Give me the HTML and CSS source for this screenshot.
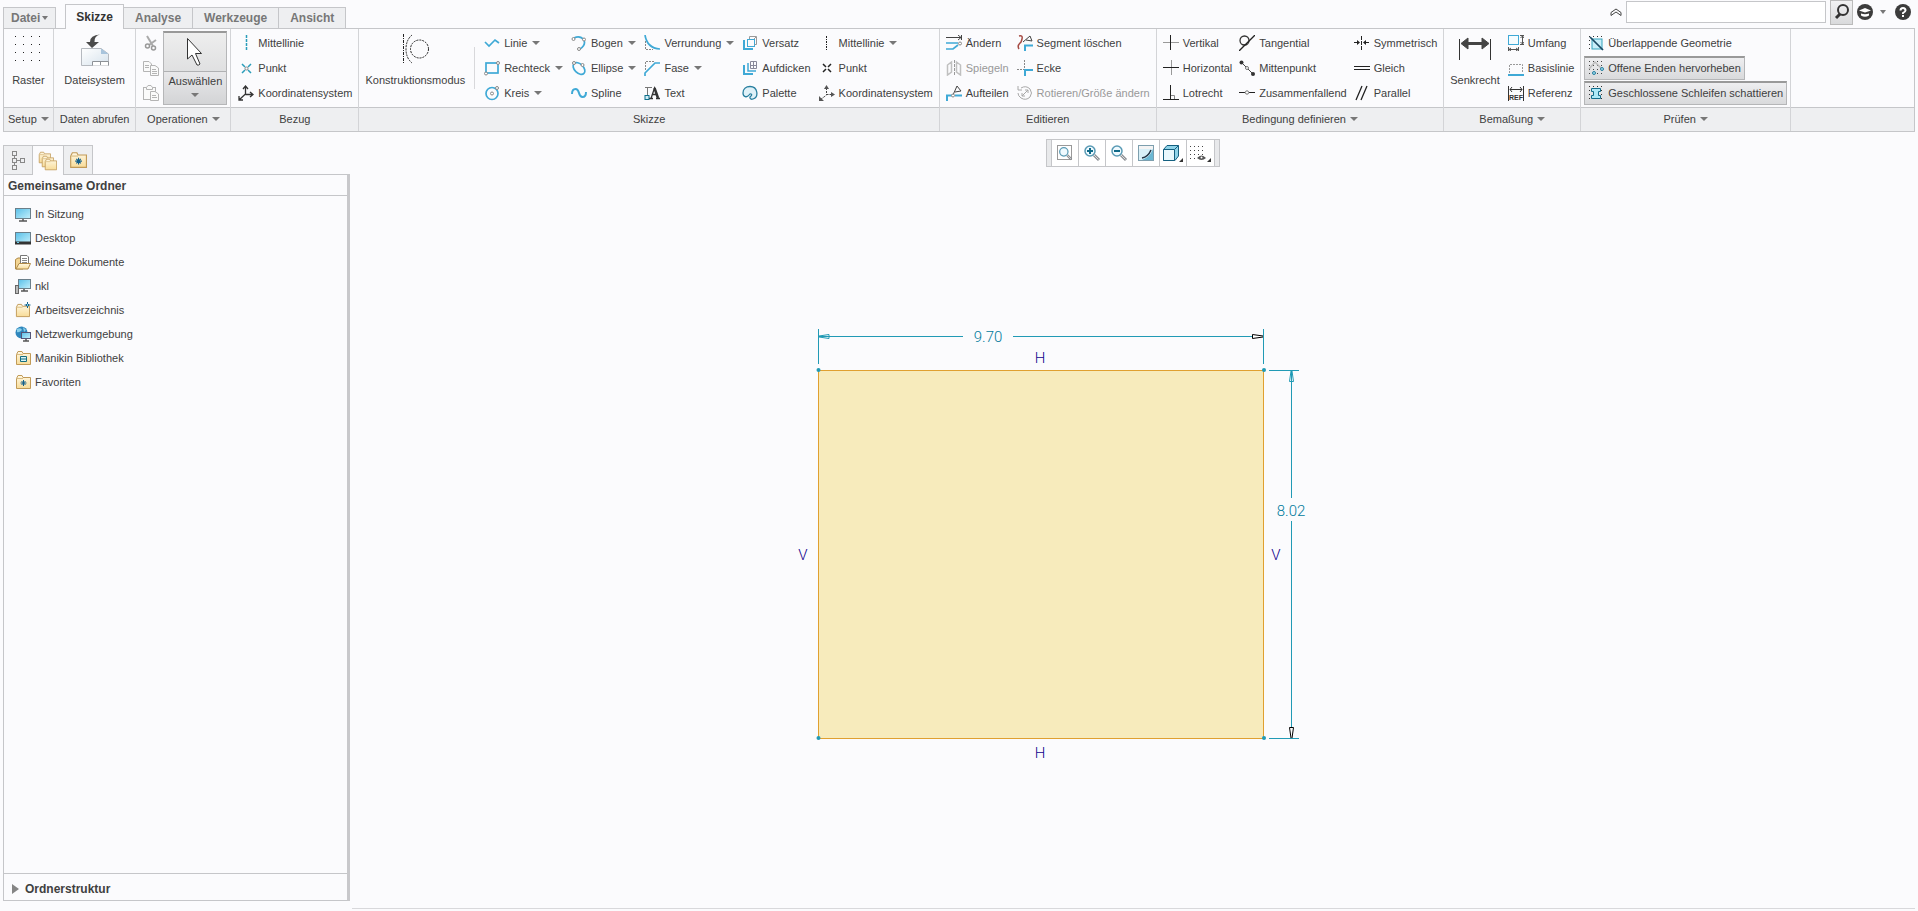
FILE: index.html
```html
<!DOCTYPE html>
<html lang="de">
<head>
<meta charset="utf-8">
<title>Skizze</title>
<link rel="stylesheet" href="styles.css">
</head>
<body>
<svg class="defs" aria-hidden="true">
  <defs>
    <linearGradient id="g-screen" x1="0" y1="0" x2="1" y2="1"><stop offset="0" stop-color="#58bfe8"/><stop offset="1" stop-color="#c4f0fc"/></linearGradient>
    <linearGradient id="g-folder" x1="0" y1="0" x2="0" y2="1"><stop offset="0" stop-color="#fff8e4"/><stop offset="1" stop-color="#f8dc98"/></linearGradient>
    <linearGradient id="g-page" x1="0" y1="0" x2="1" y2="1"><stop offset="0" stop-color="#fff"/><stop offset="1" stop-color="#d6e2ec"/></linearGradient>
    <symbol id="folder" viewBox="0 0 16 16"><path d="M1.500 4.500V14.500H15.500V3.500H8L7 1.500H3L1.500 4.500" fill="url(#g-folder)" stroke="#c19a57"/><path d="M2 4.500H8" stroke="#d9bd84"/></symbol>
    <symbol id="star" viewBox="0 0 16 16"><path d="M8.500 6V12M5.500 9H11.500M6.500 7L10.500 11M10.500 7L6.500 11" stroke="#14608a" fill="none"/></symbol>
    <symbol id="lens" viewBox="0 0 18 18"><path d="M11 11L16 16" stroke="#8b8f94" stroke-width="3"/><path d="M11 11L15.500 15.500" stroke="#ddd"/><circle cx="7" cy="7" r="5" fill="#effaff" stroke="#5a9bb5" stroke-width="1.500"/></symbol>
  </defs>
</svg>

<header class="topbar">
  <nav class="tabs">
    <button class="tab file">Datei<i class="arrow"></i></button>
    <button class="tab active">Skizze</button>
    <button class="tab">Analyse</button>
    <button class="tab">Werkzeuge</button>
    <button class="tab">Ansicht</button>
  </nav>
  <div class="search">
    <button class="plain" aria-label="Menüband minimieren"><svg width="12" height="8"><path d="M1 4.500L6 1L11 4.500M1 7.500L6 4L11 7.500M1 4.500V7.500M11 4.500V7.500" stroke="#444" fill="none"/></svg></button>
    <input type="text" class="search-box" aria-label="Suchen">
    <button class="search-btn" aria-label="Suche starten"><svg width="16" height="18"><circle cx="9" cy="7" r="5" fill="none" stroke="#333" stroke-width="2"/><path d="M6 11L2 15" stroke="#333" stroke-width="3"/></svg></button>
    <button class="plain learn" aria-label="Lernen"><svg width="16" height="16"><circle cx="8" cy="8" r="8" fill="#3c3c3c"/><path d="M2 6.500L8 4L14 6.500L8 8.500Z" fill="#fff"/><path d="M4 9.500Q8 11 12 9.500V11.500Q8 14 4 11.500Z" fill="#fff"/></svg><i class="arrow"></i></button>
    <button class="plain" aria-label="Hilfe"><svg width="16" height="16"><circle cx="8" cy="8" r="8" fill="#3c3c3c"/><path d="M5.500 6.500Q5.500 4 8 4T10.500 6.500Q10.500 7.500 8 9V10" fill="none" stroke="#fff" stroke-width="2"/><rect x="7" y="11" width="2" height="2" fill="#fff"/></svg></button>
  </div>
</header>

<section class="ribbon">
  <div class="group setup">
    <div class="body">
      <button class="big"><svg width="28" height="28"><path d="M1 2.500H28M1 10.500H28M1 18.500H28M1 26.500H28" stroke="#222" stroke-dasharray="1 7"/></svg><span>Raster</span></button>
    </div>
    <button class="label">Setup<i class="arrow"></i></button>
  </div>
  <div class="group data">
    <div class="body">
      <button class="big"><svg width="28" height="32"><path d="M.500 14.500H20L27.500 20V31.500H.500Z" fill="url(#g-page)" stroke="#b5b9bf"/><path d="M20 14.500V20H27.500Z" fill="#a8c4dc"/><path d="M11.500 31.500V27.500H27.500V31.500M19.500 27.500V31" fill="#fff" stroke="#8d9196"/><path d="M19 .500Q13 2 13.500 8H18L11 14L5 8H9Q9 1 19 .500Z" fill="#4b4b4b"/></svg><span>Dateisystem</span></button>
    </div>
    <div class="label">Daten abrufen</div>
  </div>
  <div class="group">
    <div class="body ops">
      <div class="col">
        <button class="item" aria-label="Ausschneiden"><svg width="16" height="16"><path d="M4 1L10 11M13 5L6 10" stroke="#aaa" stroke-width="2"/><circle cx="4.500" cy="11" r="2" fill="none" stroke="#999" stroke-width="1.500"/><circle cx="10.500" cy="13" r="2" fill="none" stroke="#999" stroke-width="1.500"/></svg></button>
        <button class="item" aria-label="Kopieren"><svg width="16" height="16"><g fill="#fafafa" stroke="#b4b4b4"><path d="M.500 1.500H6L8.500 4V11.500H.500Z"/><path d="M7.500 5.500H12L15.500 8V15.500H7.500Z"/><path d="M2 5.500H6M2 7.500H6M9 9.500H13M9 11.500H14M9 13.500H14"/></g></svg></button>
        <button class="item" aria-label="Einfügen"><svg width="16" height="16"><g fill="#fafafa" stroke="#b4b4b4"><rect x=".500" y="2.500" width="12" height="12"/><path d="M3.500 2.500L5 .500H8L9.500 2.500V4.500H3.500Z"/><path d="M7.500 6.500H12L15.500 9V15.500H7.500Z"/><path d="M9 10.500H13M9 12.500H14"/></g></svg></button>
      </div>
      <button class="select-btn"><span class="top"><svg width="18" height="30"><path d="M1.500 1.500V22L6 18L11 28Q13 28.500 14 27L9.500 16.500H15.500Z" fill="#fff" stroke="#333"/></svg></span><span class="bottom">Auswählen<i class="arrow"></i></span></button>
    </div>
    <button class="label">Operationen<i class="arrow"></i></button>
  </div>
  <div class="group">
    <div class="body reference">
      <div class="col">
        <button class="item"><svg width="16" height="16"><path d="M8.500 0V16" stroke="#2a9dba" stroke-width="1.500" stroke-dasharray="3 1"/></svg>Mittellinie</button>
        <button class="item"><svg width="16" height="16"><path d="M4 4L7 7M13 4L10 7M4 13L7 10M13 13L10 10" stroke="#2a9dba" stroke-width="1.500"/><circle cx="8.500" cy="8.500" r="1.500" fill="none" stroke="#888"/></svg>Punkt</button>
        <button class="item"><svg width="16" height="16"><path d="M7.500 1V9L1 15M7.500 9.500H15M5 4L7.500 1L10 4M12 7L15 9.500L12 12M1 11V15H5" stroke="#333" fill="none" stroke-width="1.300"/></svg>Koordinatensystem</button>
      </div>
    </div>
    <div class="label">Bezug</div>
  </div>
  <div class="group">
    <div class="body">
      <button class="big"><svg width="28" height="30"><g fill="none" stroke="#222" stroke-dasharray="2 1"><path d="M2.500 0V30" stroke-dasharray="3 1 1 1"/><path d="M11 1Q5 6 5 15T11 29"/><circle cx="18.500" cy="15" r="9"/></g></svg><span>Konstruktionsmodus</span></button>
      <div class="sep"></div>
      <div class="col">
        <button class="item"><svg width="16" height="16"><path d="M1 7L5 11L11 5L15 8" fill="none" stroke="#3fa9d6" stroke-width="1.700"/></svg>Linie<i class="arrow"></i></button>
        <button class="item"><svg width="16" height="16"><rect x="2" y="3" width="12" height="10" fill="none" stroke="#3fa9d6" stroke-width="1.700"/><g fill="#fff" stroke="#888"><circle cx="2" cy="13.500" r="1.500"/><circle cx="14" cy="3" r="1.500"/></g></svg>Rechteck<i class="arrow"></i></button>
        <button class="item"><svg width="16" height="16"><circle cx="8" cy="8.500" r="6" fill="none" stroke="#3fa9d6" stroke-width="1.700"/><g fill="#fff" stroke="#888"><circle cx="8" cy="8.500" r="1.500"/><circle cx="13" cy="3" r="1.500"/></g></svg>Kreis<i class="arrow"></i></button>
      </div>
      <div class="col">
        <button class="item"><svg width="16" height="16"><path d="M3 3Q9 0 13 5Q15 10 9 14" fill="none" stroke="#3fa9d6" stroke-width="1.700"/><g fill="#fff" stroke="#888"><circle cx="2.500" cy="4" r="1.500"/><circle cx="13" cy="4.500" r="1.500"/><circle cx="8" cy="14" r="1.500"/></g></svg>Bogen<i class="arrow"></i></button>
        <button class="item"><svg width="16" height="16"><ellipse cx="8" cy="8.500" rx="7" ry="4.500" transform="rotate(45 8 8.500)" fill="none" stroke="#3fa9d6" stroke-width="1.700"/><g fill="#fff" stroke="#888"><circle cx="3" cy="3" r="1.500"/><circle cx="11.500" cy="5" r="1.500"/></g></svg>Ellipse<i class="arrow"></i></button>
        <button class="item"><svg width="16" height="16"><path d="M1 9Q1 4 4.500 4Q7 4 8 8T11.500 12Q15 12 15 7" fill="none" stroke="#3fa9d6" stroke-width="2"/></svg>Spline</button>
      </div>
      <div class="col">
        <button class="item"><svg width="16" height="16"><path d="M1.500 6V14.500H9" fill="none" stroke="#888" stroke-dasharray="2 1"/><path d="M1 0Q3 13 16 14" fill="none" stroke="#3fa9d6" stroke-width="1.700"/></svg>Verrundung<i class="arrow"></i></button>
        <button class="item"><svg width="16" height="16"><path d="M1.500 10V1.500H11" fill="none" stroke="#888" stroke-dasharray="2 1"/><path d="M1 16V13L11 3H16" fill="none" stroke="#3fa9d6" stroke-width="1.700"/></svg>Fase<i class="arrow"></i></button>
        <button class="item"><svg width="16" height="16"><path d="M1 2.500H8M3.500 2V10" stroke="#777"/><path d="M5 13.500H9M12 13.500H16M7 13.500L10.500 3L14 13.500M8.500 9.500H12.500" fill="none" stroke="#333" stroke-width="1.300"/><path d="M10.500 3L14 13" stroke="#333" stroke-width="2.500"/><rect x="1" y="10.500" width="4" height="4" fill="#cfeef7" stroke="#0d6f8c"/></svg>Text</button>
      </div>
      <div class="col">
        <button class="item"><svg width="16" height="16"><path d="M2 5V14H11" fill="none" stroke="#3fa9d6" stroke-width="2"/><rect x="5.500" y="4.500" width="7" height="7" fill="none" stroke="#3fa9d6"/><path d="M7.500 4V1.500H14.500V9.500H12.500M12 4L14 2" fill="none" stroke="#999"/></svg>Versatz</button>
        <button class="item"><svg width="16" height="16"><path d="M2 5V14H11" fill="none" stroke="#3fa9d6" stroke-width="2"/><path d="M6 3V11H14" fill="none" stroke="#3fa9d6" stroke-width="1.500"/><path d="M8.500 1.500H14.500V8.500H8.500ZM11.500 1V9M8 5.500H15" fill="none" stroke="#889"/></svg>Aufdicken</button>
        <button class="item"><svg width="16" height="16"><path d="M8 1.500C16 1.500 17 12 11 14C8 15 7 12 9 11C11 9 8 8 7 10C5 13 1 12 1 8C1 4 4 1.500 8 1.500Z" fill="#dff1f8" stroke="#287f9f" stroke-width="1.300"/></svg>Palette</button>
      </div>
      <div class="col">
        <button class="item"><svg width="16" height="16"><path d="M7.500 1V16" stroke="#222" stroke-dasharray="2 1 1 1"/></svg>Mittellinie<i class="arrow"></i></button>
        <button class="item"><svg width="16" height="16"><path d="M4 4L7 7M12 4L9 7M4 12L7 9M12 12L9 9" stroke="#222" stroke-width="1.500"/></svg>Punkt</button>
        <button class="item"><svg width="16" height="16"><path d="M7.500 3V10L1 15M7.500 9.500H13" stroke="#444" fill="none" stroke-dasharray="2 1"/><path d="M5 4L7.500 0L10 4ZM12 7L16 9.500L12 12ZM0 11V16H5Z" fill="#555"/></svg>Koordinatensystem</button>
      </div>
    </div>
    <div class="label">Skizze</div>
  </div>
  <div class="group">
    <div class="body">
      <div class="col">
        <button class="item"><svg width="16" height="16"><path d="M0 2.500H15M15.500 0V5M12 0L15 2.500L12 5" stroke="#444" fill="none"/><path d="M0 8H12M0 14H7L12 10" stroke="#3fa9d6" fill="none" stroke-width="1.700"/><circle cx="14" cy="8.500" r="1.500" fill="#fff" stroke="#888"/></svg>Ändern</button>
        <button class="item" disabled><svg width="16" height="16"><path d="M1.500 5L5.500 2V12L1.500 15ZM10.500 2L14.500 5V15L10.500 12Z" fill="none" stroke="#c0c0c0" stroke-width="1.500"/><path d="M8.500 0V16" stroke="#999" stroke-dasharray="3 1"/></svg>Spiegeln</button>
        <button class="item"><svg width="16" height="16"><path d="M1 16V10.500H6M9 10.500H16" fill="none" stroke="#3fa9d6" stroke-width="2"/><path d="M7 10L11 1L15 6L9 7" fill="none" stroke="#444"/><circle cx="7" cy="10.500" r="1.500" fill="#fff" stroke="#888"/></svg>Aufteilen</button>
      </div>
      <div class="col">
        <button class="item"><svg width="16" height="16"><path d="M2 1Q6 0 5 4T3 8Q0 11 2 14" fill="none" stroke="#a64b44" stroke-width="1.500"/><path d="M6 7L13 1L15 6L9 5" fill="none" stroke="#444"/><path d="M8 16V10.500H16" fill="none" stroke="#3fa9d6" stroke-width="2"/></svg>Segment löschen</button>
        <button class="item"><svg width="16" height="16"><path d="M7.500 0V9M0 9.500H7" stroke="#888" stroke-dasharray="2 1"/><path d="M8 16V10H16" fill="none" stroke="#3fa9d6" stroke-width="2"/></svg>Ecke</button>
        <button class="item" disabled><svg width="16" height="16"><path d="M4 3Q9 0 13 4Q16 8 13 12Q9 16 4 13Q1 11 1 8M1 1V5H5M5 11L11 5M8 5H11V8M5 8V11H8" fill="none" stroke="#a8a8a8"/></svg>Rotieren/Größe ändern</button>
      </div>
    </div>
    <div class="label">Editieren</div>
  </div>
  <div class="group">
    <div class="body conditions">
      <div class="col">
        <button class="item"><svg width="16" height="16"><path d="M0 7.500H16" stroke="#999"/><path d="M7.500 0V15" stroke="#222"/></svg>Vertikal</button>
        <button class="item"><svg width="16" height="16"><path d="M8.500 0V15" stroke="#999"/><path d="M0 7.500H16" stroke="#222"/></svg>Horizontal</button>
        <button class="item"><svg width="16" height="16"><path d="M7.500 0V14M0 14.500H16" stroke="#222"/><path d="M8 10.500H11.500V14" fill="none" stroke="#888"/></svg>Lotrecht</button>
      </div>
      <div class="col">
        <button class="item"><svg width="16" height="16"><circle cx="5.500" cy="5.500" r="4.500" fill="none" stroke="#333" stroke-width="1.300"/><path d="M0 16L16 0" stroke="#222" stroke-width="1.300"/></svg>Tangential</button>
        <button class="item"><svg width="16" height="16"><path d="M2 2L14 14" stroke="#444"/><circle cx="2.500" cy="2.500" r="2" fill="#333"/><circle cx="14" cy="14" r="2" fill="#333"/><circle cx="8" cy="8" r="1.500" fill="#fff" stroke="#777"/></svg>Mittenpunkt</button>
        <button class="item"><svg width="16" height="16"><path d="M0 7.500H6M10 7.500H16" stroke="#222"/><circle cx="8" cy="7.500" r="1.700" fill="#fff" stroke="#777"/></svg>Zusammenfallend</button>
      </div>
      <div class="col">
        <button class="item"><svg width="16" height="16"><path d="M7.500 1V15" stroke="#222" stroke-dasharray="4 1"/><path d="M0 7.500H4M11 7.500H15" stroke="#222"/><path d="M3 5L6 7.500L3 10ZM12 5L9 7.500L12 10Z" fill="#222"/></svg>Symmetrisch</button>
        <button class="item"><svg width="16" height="16"><path d="M0 6.500H16M0 9.500H16" stroke="#222"/></svg>Gleich</button>
        <button class="item"><svg width="16" height="16"><path d="M2 15L8 1M7 15L13 1" stroke="#222" stroke-width="1.300"/></svg>Parallel</button>
      </div>
    </div>
    <button class="label">Bedingung definieren<i class="arrow"></i></button>
  </div>
  <div class="group">
    <div class="body">
      <button class="big"><svg width="32" height="26"><path d="M.500 5V26M31.500 5V26" stroke="#333"/><path d="M2 9.500L9 4V8.500H23V4L30 9.500L23 15V10.500H9V15Z" fill="#444" stroke="#444"/></svg><span>Senkrecht</span></button>
      <div class="col">
        <button class="item"><svg width="16" height="16"><rect x=".500" y=".500" width="10" height="9" fill="#f4fcff" stroke="#3fa9d6"/><path d="M14.500 1V9M12 .500H16M12 9.500H16M12.500 3L14.500 1L16 3M12.500 7L14.500 9L16 7M.500 12V16M10.500 12V16M1 14.500H10M3 13L1 14.500L3 16M8 13L10 14.500L8 16" fill="none" stroke="#555"/></svg>Umfang</button>
        <button class="item"><svg width="16" height="16"><path d="M1.500 13V4.500H14.500V13" fill="none" stroke="#999" stroke-dasharray="2 1"/><path d="M0 15H16" stroke="#3fa9d6" stroke-width="2"/></svg>Basislinie</button>
        <button class="item"><svg width="16" height="16"><path d="M.500 1V16M15.500 1V16M2 4.500H14M4 2L2 4.500L4 7M12 2L14 4.500L12 7" fill="none" stroke="#333"/><text x="8" y="15" class="ref-text">REF</text></svg>Referenz</button>
      </div>
    </div>
    <button class="label">Bemaßung<i class="arrow"></i></button>
  </div>
  <div class="group">
    <div class="body checks">
      <div class="col">
        <button class="item"><svg width="16" height="16"><path d="M1 1.500H16M1 5.500H16M1 9.500H16M1 13.500H16" stroke="#333" stroke-dasharray="1 3"/><rect x="4" y="4" width="10" height="10" fill="#c9effa" stroke="#35a3bd"/><path d="M2 2L15 15" stroke="#1c4963" stroke-width="1.700"/></svg>Überlappende Geometrie</button>
        <button class="item pressed"><svg width="16" height="16"><path d="M1 1.500H16M1 5.500H16M1 9.500H16M1 13.500H16" stroke="#444" stroke-dasharray="1 3"/><path d="M1 9L7 2L13 8" fill="none" stroke="#bbb" stroke-width="1.500"/><circle cx="6" cy="13" r="1.500" fill="#9edcf0" stroke="#287f9f"/><circle cx="14" cy="9" r="1.500" fill="#9edcf0" stroke="#287f9f"/></svg>Offene Enden hervorheben</button>
        <button class="item pressed"><svg width="16" height="16"><path d="M1 1.500H16M1 5.500H16M1 9.500H16M1 13.500H16" stroke="#333" stroke-dasharray="1 3"/><path d="M3.500 3.500H12.500V6.500H10.500V10.500H12.500V13.500H3.500V10.500H5.500V6.500H3.500Z" fill="#aee9f8" stroke="#146e8c"/></svg>Geschlossene Schleifen schattieren</button>
      </div>
    </div>
    <button class="label">Prüfen<i class="arrow"></i></button>
  </div>
  <div class="group rest"><div class="body"></div><div class="label"></div></div>
</section>

<main class="work">
  <aside class="side">
    <nav class="side-tabs">
      <button class="side-tab" aria-label="Modellbaum"><svg width="16" height="20"><g fill="none" stroke="#888"><rect x="2.500" y="1.500" width="4" height="4"/><rect x="2.500" y="8.500" width="4" height="4"/><rect x="10.500" y="8.500" width="4" height="4"/><rect x="2.500" y="15.500" width="4" height="4"/><path d="M4.500 6V8M4.500 13V15M7 10.500H10"/></g></svg></button>
      <button class="side-tab active" aria-label="Ordnerbrowser"><svg width="20" height="20"><use href="#folder" width="13" height="13"/><use href="#folder" x="3" y="4" width="13" height="13"/><use href="#folder" x="6" y="7" width="13" height="13"/></svg></button>
      <button class="side-tab" aria-label="Favoriten"><svg width="18" height="18"><use href="#folder" width="18" height="18"/><use href="#star" width="18" height="18"/></svg></button>
    </nav>
    <div class="panel">
      <h2 class="panel-title">Gemeinsame Ordner</h2>
      <ul class="folders">
        <li><a href="#"><svg width="16" height="16"><rect x=".500" y="2.500" width="15" height="10" fill="url(#g-screen)" stroke="#6b7f8a"/><path d="M8 13V15M4 15H12" stroke="#555" stroke-width="1.500"/></svg>In Sitzung</a></li>
        <li><a href="#"><svg width="16" height="16"><rect x=".500" y="2.500" width="15" height="11" fill="url(#g-screen)" stroke="#6b7f8a"/><path d="M0 13H16" stroke="#333" stroke-width="3"/><path d="M2 12.500H4" stroke="#6fd0ea"/></svg>Desktop</a></li>
        <li><a href="#"><svg width="16" height="16"><path d="M.500 15V5.500L3 4H8V15Z" fill="#f3d594" stroke="#b08a48"/><path d="M5.500 12V1.500H12L13.500 3V12Z" fill="#fff" stroke="#777"/><path d="M7 4.500H12M7 6.500H12M7 8.500H12" stroke="#888"/><path d="M1 15L4 9.500H15.500L13 15Z" fill="url(#g-folder)" stroke="#b08a48"/></svg>Meine Dokumente</a></li>
        <li><a href="#"><svg width="16" height="16"><rect x="3.500" y="1.500" width="12" height="9" fill="url(#g-screen)" stroke="#6b7f8a"/><path d="M9 11V13M6 13H13" stroke="#555" stroke-width="1.500"/><rect x=".500" y="7.500" width="3" height="8" fill="#bbb" stroke="#666"/></svg>nkl</a></li>
        <li><a href="#"><svg width="16" height="16"><use href="#folder" y="1" width="15" height="15"/><path d="M12.500 0V6M9.500 3H15.500" stroke="#14608a"/><path d="M12.500 1.500L14 3L12.500 4.500L11 3Z" fill="#7ed0e8" stroke="#14608a"/></svg>Arbeitsverzeichnis</a></li>
        <li><a href="#"><svg width="16" height="16"><circle cx="6.500" cy="6.500" r="6" fill="#2f86bd"/><path d="M2 3Q6 1 7 4Q4 7 2 6M8 1L11 4L9 6" fill="#8ad0ea"/><rect x="6.500" y="6.500" width="9" height="6" fill="url(#g-screen)" stroke="#557"/><path d="M11 13V15M8 15H14" stroke="#555" stroke-width="1.500"/></svg>Netzwerkumgebung</a></li>
        <li><a href="#"><svg width="16" height="16"><use href="#folder" width="16" height="16"/><path d="M5.500 6.500H11.500V11.500H5.500ZM5 9H12" fill="#d9f3f6" stroke="#146e80"/></svg>Manikin Bibliothek</a></li>
        <li><a href="#"><svg width="16" height="16"><use href="#folder" width="16" height="16"/><use href="#star" width="16" height="16"/></svg>Favoriten</a></li>
      </ul>
      <button class="tree-toggle"><svg width="8" height="10"><path d="M0 0L7 5L0 10Z" fill="#858585"/></svg>Ordnerstruktur</button>
    </div>
  </aside>
  <section class="canvas">
    <div class="viewbar">
      <button aria-label="Einpassen"><svg width="18" height="18"><rect x="1.500" y="1.500" width="14" height="14" fill="#fff" stroke="#999"/><use href="#lens" x="2" y="2" width="15" height="15"/></svg></button>
      <button aria-label="Vergrößern"><svg width="18" height="18"><use href="#lens" width="18" height="18"/><path d="M7 4V10M4 7H10" stroke="#0f6a88" stroke-width="2"/></svg></button>
      <button aria-label="Verkleinern"><svg width="18" height="18"><use href="#lens" width="18" height="18"/><path d="M4 7H10" stroke="#0f6a88" stroke-width="2"/></svg></button>
      <button aria-label="Neu zeichnen"><svg width="18" height="18"><rect x="1.500" y="1.500" width="15" height="15" fill="#d8f0f8" stroke="#7d9fae"/><path d="M2 2H16V5H2Z" fill="#f4f4f4"/><path d="M16 5V16H5Q13 13 16 5Z" fill="#6bb8d4"/><path d="M5 14Q11 13 14 6" stroke="#234" stroke-width="1.500"/></svg></button>
      <button aria-label="Darstellungsstil"><svg width="22" height="18"><path d="M1.500 5.500L5 1.500H16.500V12L13 16.500H1.500Z" fill="#8fd3e8" stroke="#146080"/><path d="M1.500 5.500H12.500V16.500H1.500Z" fill="#e8f8fd" stroke="#146080"/><path d="M12.500 5.500L16.500 1.500" stroke="#146080"/><path d="M21 14V18H17Z" fill="#333"/></svg></button>
      <button class="wide" aria-label="Skizzendarstellung"><svg width="22" height="18"><path d="M1 2.500H16M1 6.500H16M1 10.500H16M1 14.500H8" stroke="#444" stroke-dasharray="1 3"/><path d="M8 14Q12.500 9 17 14Q12.500 18 8 14Z" fill="#555"/><circle cx="12.500" cy="13.500" r="1" fill="#fff"/><path d="M22 14V18H18Z" fill="#333"/></svg></button>
    </div>
    <svg class="sketch" width="700" height="460" viewBox="783 310 700 460" role="img" aria-label="Rechteck 9.70 × 8.02">
      <rect x="818.500" y="370.500" width="445" height="368" fill="#f7ebbc" stroke="#e0a030"/>
      <g class="dim">
        <path d="M818.500 329V364M1263.500 329V364M819 336.500H963M1013 336.500H1263"/>
        <path d="M1269 370.500H1299M1269 738.500H1299M1291.500 371V498M1291.500 521V738"/>
        <path d="M819 336L829 334.500V338.500L819 337M1291 371L1289.500 381.500H1293.500L1292 371"/>
      </g>
      <path d="M1263 336L1252.500 334.500V338.500L1263 337M1291 738L1289.500 727.500H1293.500L1292 738" fill="#fff" stroke="#000"/>
      <g fill="#219ab5"><circle cx="818.500" cy="370" r="2"/><circle cx="1264" cy="370" r="2"/><circle cx="818.500" cy="738" r="2"/><circle cx="1264" cy="738" r="2"/></g>
      <text class="dim-text" x="988" y="342">9.70</text>
      <text class="dim-text" x="1291" y="516">8.02</text>
      <g class="constraint">
        <text x="1040" y="363">H</text><text x="1040" y="758">H</text>
        <text x="803" y="560">V</text><text x="1276" y="560">V</text>
      </g>
    </svg>
  </section>
</main>
</body>
</html>
```

FILE: styles.css
```css
* { box-sizing: border-box; }

body {
  margin: 0;
  min-height: 100vh;
  display: flex;
  flex-direction: column;
  background: #fbfbfd;
  color: #404040;
  font: 11px/16px "Liberation Sans", Arial, sans-serif;
}

button {
  margin: 0;
  padding: 0;
  border: 0;
  background: none;
  color: inherit;
  font: inherit;
  white-space: nowrap;
}

svg { flex: none; display: block; fill: none; }
.defs { position: absolute; width: 0; height: 0; }

.arrow {
  display: inline-block;
  border: 4px solid transparent;
  border-top: 4px solid #777;
  border-bottom: 0;
}

/* Top bar */
.topbar { display: flex; justify-content: space-between; height: 28px; padding: 0 7px 0 3px; }
.tabs { display: flex; align-items: flex-end; }
.tab {
  height: 21px;
  padding: 0 11px;
  border: 1px solid #c5c6c9;
  border-left: 0;
  border-bottom: 0;
  background: #eeeff1;
  color: #777;
  font-size: 12px;
  font-weight: bold;
}
.tab.file { display: flex; align-items: center; gap: 2px; margin-right: 9px; padding: 0 7px; border-left: 1px solid #c5c6c9; }
.tab.file .arrow { border-width: 4px 3px 0; }
.tab.active {
  position: relative;
  z-index: 1;
  height: 25px;
  margin-bottom: -1px;
  padding: 0 10px;
  border-left: 1px solid #c5c6c9;
  background: #fbfbfd;
  color: #333;
}
.search { display: flex; align-items: center; gap: 4px; height: 24px; }
.search-box { width: 200px; height: 22px; border: 1px solid #c5c6c9; background: #fff; }
.search-btn {
  display: flex;
  align-items: center;
  justify-content: center;
  width: 23px;
  height: 25px;
  border: 1px solid #bbb;
  background: linear-gradient(#f2f2f3, #d9dadc);
}
.learn { display: flex; align-items: center; gap: 7px; margin-right: 5px; }
.learn .arrow { border-width: 4px 3px 0; }

/* Ribbon */
.ribbon { display: flex; margin: 0 3px; border: 1px solid #c5c6c9; }
.group { display: flex; flex-direction: column; border-right: 1px solid #d3d4d7; }
.rest { flex: 1; border-right: 0; }
.body { display: flex; justify-content: center; gap: 8px; height: 78px; padding: 2px 6px; }
.label {
  display: flex;
  align-items: center;
  justify-content: center;
  gap: 4px;
  height: 24px;
  padding: 0 6px 2px;
  border-top: 1px solid #c5c6c9;
  background: #eeeff1;
}
.col { display: flex; flex-direction: column; align-items: flex-start; gap: 1px; }
.item { display: flex; align-items: center; gap: 4px; height: 24px; }
.item .arrow { margin-left: 1px; }
.item:disabled { color: #999; }
.big { display: flex; flex-direction: column; align-items: center; justify-content: flex-end; gap: 8px; height: 57px; padding-top: 3px; }
.big svg { margin-bottom: auto; }
.data .big { gap: 6px; }
.setup .label { padding: 0 4px 2px; }
.sep { width: 1px; height: 42px; margin: 16px 1px 0; background: #d8d8db; }
.ops { gap: 4px; padding: 2px 3px 2px 7px; }
.reference { padding: 2px 6px 2px 7px; }
.conditions { gap: 7px; }
.select-btn { display: flex; flex-direction: column; height: 74px; border: 1px solid #b5b6b8; border-top: 2px solid #999; background: linear-gradient(#eee, #d3d4d6); }
.select-btn .top { display: flex; justify-content: center; width: 100%; height: 39px; padding-top: 4px; border-bottom: 1px solid #b0b1b3; }
.select-btn .bottom { display: flex; flex: 1; flex-direction: column; align-items: center; width: 100%; gap: 4px; padding: 1px 4px; background: linear-gradient(#e8e8ea, #d3d4d6); }
.checks { padding: 2px 3px; }
.checks .item { padding: 0 3px; border: 1px solid transparent; }
.checks .pressed { padding-bottom: 1px; border: 1px solid #b5b6b8; border-top: 2px solid #999; background: linear-gradient(#eeeef0, #d9dadc); }
.ref-text { font: bold 7px "Liberation Sans", Arial, sans-serif; fill: #333; text-anchor: middle; }

/* Work area */
.work { display: flex; flex: 1; }
.side { display: flex; flex-direction: column; width: 347px; margin: 13px 0 10px 3px; }
.side-tabs { display: flex; }
.side-tab {
  display: flex;
  align-items: center;
  justify-content: center;
  width: 30px;
  height: 29px;
  border: 1px solid #c5c6c9;
  border-bottom: 0;
  background: #eeeff1;
}
.side-tab.active { position: relative; z-index: 1; height: 30px; margin-bottom: -1px; border-width: 1px 0 0; background: #fbfbfd; }
.panel { display: flex; flex: 1; flex-direction: column; border: 1px solid #c5c6c9; border-right: 3px solid #c8c8cb; }
.panel-title { margin: 0; padding: 3px 4px 1px; border-bottom: 1px solid #c5c6c9; font-size: 12px; line-height: 16px; }
.folders { flex: 1; margin: 0; padding: 6px 11px; list-style: none; }
.folders a { display: flex; align-items: center; gap: 4px; height: 24px; color: inherit; text-decoration: none; }
.tree-toggle { display: flex; align-items: center; gap: 5px; height: 27px; padding: 3px 8px 0; border-top: 1px solid #c5c6c9; font-size: 12px; font-weight: bold; }

.canvas { display: flex; flex: 1; flex-direction: column; align-items: center; margin: 0 3px 2px 2px; padding: 7px 2px 0 0; border-bottom: 1px solid #d8d8db; }
.viewbar { display: flex; border: 1px solid #c5c6c9; background: #e8e9eb; padding: 0 4px; }
.viewbar button { display: flex; align-items: center; justify-content: center; width: 27px; height: 26px; border-left: 1px solid #c5c6c9; background: #fff; }
.viewbar .wide { width: 29px; border-right: 1px solid #c5c6c9; }
.sketch { margin-top: 143px; }
.dim { fill: none; stroke: #219ab5; }
.dim-text { font: 300 15px Roboto, "Liberation Sans", sans-serif; fill: #007a9c; text-anchor: middle; }
.constraint { font: 300 15px Roboto, "Liberation Sans", sans-serif; fill: #10008c; text-anchor: middle; }
```
